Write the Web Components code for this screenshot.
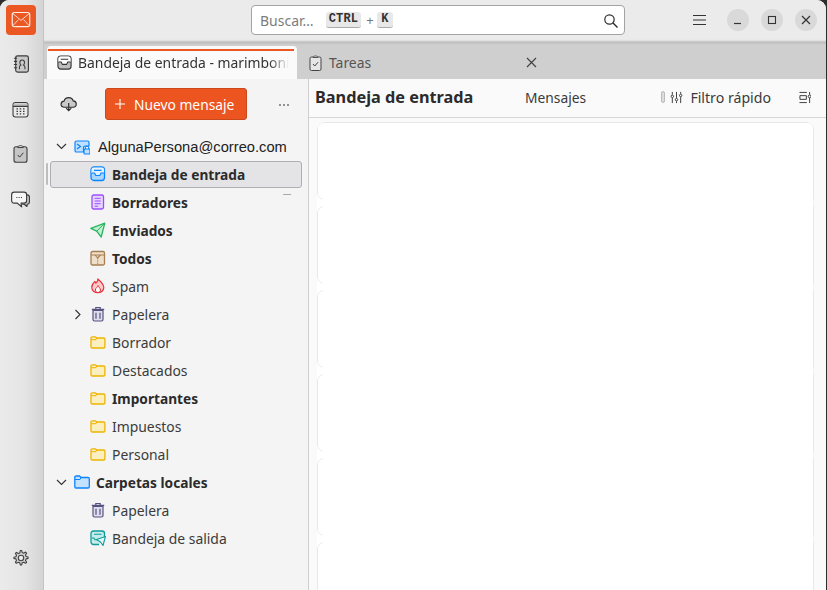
<!DOCTYPE html>
<html lang="es">
<head>
<meta charset="utf-8">
<title>Correo</title>
<style>
  html, body { margin: 0; height: 100%; background: #2d2d2d; overflow: hidden; }
  body { font-family: "Noto Sans", "Open Sans", sans-serif; font-size: 14px; color: #333; }
</style>
</head>
<body>
<tb-app>
  <tb-rail slot="rail"></tb-rail>
  <tb-topbar slot="top"></tb-topbar>
  <tb-tabs slot="tabs">
    <tb-tab active icon="inbox-gray" label="Bandeja de entrada - marimboni"></tb-tab>
    <tb-tab icon="tasks-tab" label="Tareas" closable></tb-tab>
  </tb-tabs>
  <tb-folders slot="folders">
    <tb-folder level="0" twisty="open" icon="account" account>AlgunaPersona@correo.com</tb-folder>
    <tb-folder level="1" icon="inbox" bold selected>Bandeja de entrada</tb-folder>
    <tb-folder level="1" icon="drafts" bold>Borradores</tb-folder>
    <tb-folder level="1" icon="sent" bold>Enviados</tb-folder>
    <tb-folder level="1" icon="archive" bold>Todos</tb-folder>
    <tb-folder level="1" icon="spam">Spam</tb-folder>
    <tb-folder level="1" twisty="closed" icon="trash">Papelera</tb-folder>
    <tb-folder level="1" icon="folder">Borrador</tb-folder>
    <tb-folder level="1" icon="folder">Destacados</tb-folder>
    <tb-folder level="1" icon="folder" bold>Importantes</tb-folder>
    <tb-folder level="1" icon="folder">Impuestos</tb-folder>
    <tb-folder level="1" icon="folder">Personal</tb-folder>
    <tb-folder level="0" twisty="open" icon="local" bold>Carpetas locales</tb-folder>
    <tb-folder level="1" icon="trash">Papelera</tb-folder>
    <tb-folder level="1" icon="outbox">Bandeja de salida</tb-folder>
  </tb-folders>
  <tb-messages slot="main"></tb-messages>
</tb-app>

<script>
const ICONS = {
  logo: '<rect x="1.5" y="3" width="21" height="17" rx="2.5" fill="none" stroke="#fff" stroke-width="1.4" opacity=".9"/><path d="M2.5 4.5 12 12.5l9.5-8M2.5 18.5l6.5-7M21.5 18.5l-6.5-7" fill="none" stroke="#fff" stroke-width="1.2" opacity=".75"/>',
  book: '<rect x="3.5" y=".75" width="12" height="15.5" rx="1.8" fill="#c9c9c9" stroke="#3c3c3c" stroke-width="1.1"/><path d="M1.8 3h3M1.8 6h3M1.8 9h3M1.8 12h3" stroke="#3c3c3c" stroke-width="1"/><path d="M7 13.5v-2c0-1 .7-1.6 1.4-2-.8-.6-1-1.3-1-2.3C7.4 6 8.2 4.8 9.6 4.8s2.2 1.2 2.2 2.4c0 1-.2 1.7-1 2.3.7.4 1.4 1 1.4 2v2" fill="none" stroke="#3c3c3c" stroke-width="1"/>',
  calendar: '<rect x="1" y="1.5" width="15" height="14.5" rx="2.5" fill="#e9e9e9" stroke="#3c3c3c" stroke-width="1.1"/><path d="M1.5 2.5h14v2.8h-14z" fill="#c2c2c2"/><path d="M1 5.4h15" stroke="#3c3c3c" stroke-width="1.1"/><path d="M4.5 7.8H6M7.7 7.8h1.500M11 7.800h1.500M4.500 10.300H6M7.700 10.300h1.500M11 10.300h1.500M4.500 12.800H6M7.700 12.800h1.500M11 12.800h1.500" stroke="#3c3c3c" stroke-width="1.2"/>',
  tasks: '<rect x="2" y="2" width="13" height="15.5" rx="2" fill="#c6c6c6" stroke="#3c3c3c" stroke-width="1.1"/><path d="M5.800 2.800c0-1.600 1-1.900 2.700-1.900s2.700.3 2.700 1.900z" fill="#e6e6e6" stroke="#3c3c3c"/><path d="M5.700 10.200l2 2.200 3.600-4.400" fill="none" stroke="#3c3c3c" stroke-width="1"/>',
  chat: '<path d="M14 3.500h1.200c1.500 0 2.300 1 2.300 2.300v4.200c0 1.300-.8 2.300-2.200 2.300l-.2 2.200-2.600-2.200h-2" fill="#c6c6c6" stroke="#3c3c3c" stroke-width="1.1" stroke-linejoin="round"/><path d="M3 .8h9.300c1.500 0 2.500 1 2.500 2.500v5.400c0 1.500-1 2.500-2.500 2.500H9.500l.6 3.600-4.300-3.600H3C1.500 11.200.6 10.200.6 8.700V3.300C.6 1.800 1.500.8 3 .8z" fill="#f6f6f6" stroke="#3c3c3c" stroke-width="1.1" stroke-linejoin="round"/><path d="M5 6h1M7.200 6h1M9.400 6h1" stroke="#3c3c3c" stroke-width="1"/>',
  gear: '<path d="M8.300 1h1.400l.5 2.100 1.500.6 1.900-1.100 1 1-1.100 1.900.6 1.500 2 .5v1.400l-2 .5-.6 1.500 1.100 1.900-1 1-1.900-1.100-1.500.6-.5 2.100H8.300l-.5-2.100-1.500-.6-1.900 1.100-1-1 1.100-1.900-.6-1.500-2-.5V7.800l2-.5.6-1.500-1.100-1.900 1-1 1.900 1.100 1.500-.6z" fill="#d2d2d2" stroke="#444" stroke-width="1.1" stroke-linejoin="round"/><circle cx="9" cy="8.500" r="2.700" fill="#ececec" stroke="#444" stroke-width="1.1"/>',
  search: '<circle cx="6.500" cy="6.500" r="4.700" fill="none" stroke="#2d2d2d" stroke-width="1.2"/><path d="M10 10l4.500 4.500" stroke="#2d2d2d" stroke-width="1.4"/>',
  'inbox-gray': '<rect x="1" y="1" width="14" height="14" rx="3" fill="#bdbdbd" stroke="#333" stroke-width="1.2"/><path d="M1.500 7.500h3l1.300 2.500h4.400l1.300-2.500h3V3.500q0-2-2-2h-9q-2 0-2 2z" fill="#fff"/><path d="M1.500 7.500h3l1.300 2.500h4.400l1.300-2.500h3M4 4.500h8" fill="none" stroke="#333" stroke-width="1.1"/>',
  'tasks-tab': '<rect x="2" y="2" width="11" height="13.500" rx="1.500" fill="#e6e6e6" stroke="#444" stroke-width="1"/><path d="M5.200 2.500c0-1.100.9-1.500 2.300-1.500s2.300.4 2.300 1.500z" fill="#f2f2f2" stroke="#444" stroke-width=".9"/><path d="M5 9l1.800 2 3.200-3.800" fill="none" stroke="#444" stroke-width="1"/>',
  cloud: '<path d="M4.300 11.500C2.300 11.500 1 10.300 1 8.700 1 7 2.200 5.900 3.800 5.800 4.300 3.800 6 2.500 8.200 2.500c2.100 0 3.700 1.200 4.200 3 1.600.1 2.900 1.400 2.900 3 0 1.700-1.300 3-3 3z" fill="#c9c9c9" stroke="#2d2d2d" stroke-width="1.1"/><path d="M8.200 7.500v7M5.800 12.300l2.400 2.500 2.400-2.500" fill="none" stroke="#2d2d2d" stroke-width="1.1"/>',
  sliders: '<path d="M2.500 1v3M2.500 7.500V13M7 1v6.500M7 11v2M11.500 1v2M11.500 6.500V13" stroke="#333" stroke-width="1"/><circle cx="2.500" cy="5.800" r="1.300" fill="none" stroke="#333"/><circle cx="7" cy="9.300" r="1.300" fill="none" stroke="#333"/><circle cx="11.500" cy="4.800" r="1.300" fill="none" stroke="#333"/>',
  layout: '<path d="M.5 1.500h8M.5 12.500h8M1 5h7v4H1zM11.500 1v3M11.500 7.500V13" fill="none" stroke="#333" stroke-width="1"/><circle cx="11.500" cy="5.800" r="1.500" fill="none" stroke="#333"/>',
  account: '<path d="M2.500 2h11c.9 0 1.500.6 1.500 1.500V7H11c-1 0-1.500.7-1.500 1.500V13h-7C1.600 13 1 12.400 1 11.500v-8C1 2.600 1.600 2 2.500 2z" fill="#bfe0ff" stroke="#0a84ff" stroke-width="1.2"/><path d="M3 5l3.500 2.500L3 10" fill="none" stroke="#0a84ff" stroke-width="1.2"/><rect x="10" y="10" width="6" height="5" rx="1" fill="#bfe0ff" stroke="#0a84ff" stroke-width="1.2"/><path d="M11.300 10V8.800c0-1 .7-1.600 1.700-1.600s1.700.6 1.700 1.600V10" fill="none" stroke="#0a84ff" stroke-width="1.1"/>',
  inbox: '<rect x="1" y="1" width="13.500" height="13.500" rx="3" fill="#a9d6ff" stroke="#0a84ff" stroke-width="1.3"/><path d="M1.500 7h3l1.300 2.500h4l1.300-2.500h3V3.500q0-2-2-2h-8.600q-2 0-2 2z" fill="#e4f2ff"/><path d="M1.500 7h3l1.300 2.500h4l1.300-2.500h3M4 4.300h7.500" fill="none" stroke="#0a84ff" stroke-width="1.2"/>',
  drafts: '<rect x="2" y="1" width="11.500" height="14" rx="1.800" fill="#e8d5ff" stroke="#9a4dff" stroke-width="1.3"/><path d="M4.700 4.300h6M4.700 7h6M4.700 9.700h6M4.700 12.200h3.500" stroke="#9a4dff" stroke-width="1"/>',
  sent: '<path d="M.8 6.300 14.800 1.200 11.200 15 6.700 9.200z" fill="#bfeed2" stroke="#2bb560" stroke-width="1.3" stroke-linejoin="round"/><path d="M6.700 9.200 14.800 1.200" stroke="#2bb560" stroke-width="1"/>',
  archive: '<rect x="1" y="1.500" width="13.500" height="13.500" rx="1.500" fill="#f0dfc8" stroke="#a57e52" stroke-width="1.3"/><path d="M1 5h13.500M5 5l2.700 3L10.500 5" fill="none" stroke="#a57e52" stroke-width="1.1"/><path d="M7.700 8v7" stroke="#a57e52" stroke-width="1" stroke-dasharray="1.300 1"/>',
  spam: '<path d="M7.800 1C8.300 3.300 6.800 4.200 5.800 5.200 5.400 4.500 5.200 4 5 3.400 3 5 1.800 6.900 1.800 9.300c0 3.200 2.500 5.400 6 5.400s6-2.200 6-5.300c0-3.200-2.700-5.600-6-8.400z" fill="#ffc9c9" stroke="#e8303a" stroke-width="1.2" stroke-linejoin="round"/><path d="M8 7.500c-.2 1.400-2.600 2.400-2.600 4.500 0 1.500 1.100 2.500 2.500 2.500s2.600-1 2.600-2.500c0-1.800-2-2.800-2.500-4.500z" fill="#fff" stroke="#e8303a" stroke-width="1"/>',
  trash: '<path d="M3 4.500h10V13.500c0 1-.6 1.500-1.500 1.500h-7C3.600 15 3 14.500 3 13.500z" fill="#dfdcee" stroke="#56527f" stroke-width="1.2"/><path d="M1.800 3.300h12.400M5.800 3V1.500h4.400V3M6 6.700V12.700M10 6.700V12.700" fill="none" stroke="#56527f" stroke-width="1.2"/>',
  folder: '<path d="M1 4C1 3.300 1.500 2.800 2.300 2.800h3.200l1.200 1.200h6.900c.8 0 1.300.5 1.300 1.300v7.500c0 .8-.5 1.200-1.300 1.200H2.300C1.500 14 1 13.600 1 12.800z" fill="#fbeebf" stroke="#f0b400" stroke-width="1.3"/><path d="M1 5.700h5l.8-1.700" fill="none" stroke="#f0b400" stroke-width="1"/>',
  local: '<path d="M.8 3.300C.8 2.500 1.300 2 2.100 2h3.400l1.500 1.500h7c.8 0 1.300.5 1.300 1.300v8c0 .8-.5 1.200-1.300 1.200h-12C1.300 14 .8 13.600.8 12.800z" fill="#c4e2ff" stroke="#0a84ff" stroke-width="1.3"/><path d="M.8 5.500h5.200l1-2" fill="none" stroke="#0a84ff" stroke-width="1"/>',
  outbox: '<path d="M9 14.500H3.500C2 14.500 1 13.500 1 12V3.500C1 2 2 1 3.500 1h8.500c1.500 0 2.500 1 2.500 2.500V7" fill="#c6ecea" stroke="#0f9c9c" stroke-width="1.3"/><path d="M1.500 8h2.500l1 1.800h2.500M4 4.300h7.500" fill="none" stroke="#0f9c9c" stroke-width="1.1"/><path d="M6.500 9.500 15.500 6.500 13 15.500l-2.500-3.500z" fill="#e4f7f6" stroke="#0f9c9c" stroke-width="1.1" stroke-linejoin="round"/>',
};

function icon(name, w, h, vb) {
  return `<svg width="${w}" height="${h}" viewBox="${vb}" aria-hidden="true">${ICONS[name]}</svg>`;
}

class TbApp extends HTMLElement {
  constructor() {
    super();
    this.attachShadow({ mode: 'open' });
    this.shadowRoot.innerHTML = `
      <style>
        :host {
          display: grid;
          grid-template-columns: 44px 1fr;
          grid-template-rows: 42px 37px 1fr;
          width: 826px;
          height: 590px;
          overflow: hidden;
          background: #ebebeb;
          border-radius: 9px 9px 0 0;
        }
        .rail { grid-row: 1 / 4; display: flex; min-height: 0; }
        .main { display: grid; grid-template-columns: 265px 1fr; min-height: 0; }
      </style>
      <div class="rail"><slot name="rail"></slot></div>
      <slot name="top"></slot>
      <slot name="tabs"></slot>
      <div class="main">
        <slot name="folders"></slot>
        <slot name="main"></slot>
      </div>
    `;
  }
}

class TbRail extends HTMLElement {
  constructor() {
    super();
    this.attachShadow({ mode: 'open' });
    this.shadowRoot.innerHTML = `
      <style>
        :host {
          display: flex;
          flex-direction: column;
          align-items: center;
          width: 44px;
          box-sizing: border-box;
          padding: 5px 2px 0 0;
          background: linear-gradient(to right, #ebebeb, #e4e4e4 60%, #d4d4d4);
          border-right: 1px solid #c4c4c4;
        }
        .logo {
          width: 30px; height: 30px;
          border-radius: 4px;
          background: #ec5823;
          display: flex; align-items: center; justify-content: center;
          margin-bottom: 19px;
        }
        .btn { height: 20px; display: flex; align-items: center; justify-content: center; margin-bottom: 25px; }
        .chat { margin-top: 2px; }
        .gear { margin-top: auto; margin-bottom: 23px; height: 18px; display: flex; }
      </style>
      <div class="logo">${icon('logo', 20, 20, '0 0 24 24')}</div>
      <div class="btn">${icon('book', 18, 20, '0 0 17 17')}</div>
      <div class="btn">${icon('calendar', 17, 17, '0 0 17 17')}</div>
      <div class="btn">${icon('tasks', 17, 20, '0 0 17 18.5')}</div>
      <div class="btn chat">${icon('chat', 19, 20, '0 0 18 18.5')}</div>
      <div class="gear">${icon('gear', 18, 18, '0 0 18 17')}</div>
    `;
  }
}

class TbTopbar extends HTMLElement {
  constructor() {
    super();
    this.attachShadow({ mode: 'open' });
    this.shadowRoot.innerHTML = `
      <style>
        :host {
          display: flex;
          align-items: flex-start;
          box-sizing: border-box;
          padding: 5px 9px 0 207px;
          background: #ebebeb;
          box-shadow: inset 0 -2px 2px -1px #c0c0c0;
        }
        .search {
          width: 374px; height: 30px;
          box-sizing: border-box;
          display: flex; align-items: center;
          padding: 0 6px 0 8px;
          background: #fff;
          border: 1px solid #a3a3a3;
          border-radius: 4px;
          color: #7d7d7d;
        }
        kbd {
          font: 700 12px "Liberation Mono", "DejaVu Sans Mono", monospace;
          letter-spacing: .2px;
          color: #333;
          background: #e8e8e8;
          border-bottom: 1px solid #aaa;
          border-radius: 3px;
          padding: 1px 3px;
          line-height: 13px;
        }
        kbd + span { width: 6px; text-align: center; }
        .hint { margin-left: 12px; display: flex; align-items: center; gap: 5px; color: #777; font-size: 13px; }
        .k { padding: 1px 4px; }
        .mag { margin-left: auto; display: flex; }
        .menu { margin: 9px 0 0 68px; display: flex; }
        .win {
          width: 22px; height: 22px;
          border-radius: 50%;
          background: #d9d9d9;
          margin: 4px 0 0 12px;
          display: flex; align-items: center; justify-content: center;
        }
        .menu + .win { margin-left: 21px; }
      </style>
      <div class="search">
        <span>Buscar…</span>
        <span class="hint"><kbd>CTRL</kbd><span>+</span><kbd class="k">K</kbd></span>
        <span class="mag"><svg width="15" height="15" viewBox="0 0 15 15">${ICONS.search}</svg></span>
      </div>
      <div class="menu"><svg width="13" height="12" viewBox="0 0 13 12"><path d="M0 1.500h13M0 6h13M0 10.500h13" stroke="#333" stroke-width="1"/></svg></div>
      <div class="win"><svg width="10" height="10" viewBox="0 0 10 10"><path d="M1 8.500h7" stroke="#333" stroke-width="1.2"/></svg></div>
      <div class="win"><svg width="10" height="10" viewBox="0 0 10 10"><rect x="1.500" y="1.500" width="7" height="7" fill="none" stroke="#333" stroke-width="1.1"/></svg></div>
      <div class="win"><svg width="10" height="10" viewBox="0 0 10 10"><path d="M1 1l8 8M9 1l-8 8" stroke="#333" stroke-width="1.2"/></svg></div>
    `;
  }
}

class TbTabs extends HTMLElement {
  constructor() {
    super();
    this.attachShadow({ mode: 'open' });
    this.shadowRoot.innerHTML = `
      <style>
        :host {
          display: flex;
          align-items: flex-end;
          box-sizing: border-box;
          padding-left: 3px;
          background: linear-gradient(#bdbdbd, #cfcfcf 3px);
        }
      </style>
      <slot></slot>
    `;
  }
}

class TbTab extends HTMLElement {
  connectedCallback() {
    if (this.shadowRoot) return;
    this.attachShadow({ mode: 'open' });
    const active = this.hasAttribute('active');
    const name = this.getAttribute('icon');
    this.shadowRoot.innerHTML = `
      <style>
        :host {
          display: flex;
          align-items: center;
          position: relative;
          box-sizing: border-box;
          width: 250px;
          height: 33px;
          padding: ${active ? '0 0 0 10px' : '0 0 0 11px'};
          gap: ${active ? 6 : 5}px;
          background: ${active ? '#fafafa' : 'transparent'};
          border-radius: 4px 4px 0 0;
          color: ${active ? '#333' : '#555'};
          font-size: 13.9px;
          white-space: nowrap;
        }
        .bar {
          position: absolute; left: 1px; right: 3px; top: 3px;
          height: 2px; background: #ec5823;
        }
        .label {
          flex: 1; min-width: 0;
          ${active ? '-webkit-mask-image: linear-gradient(to left, transparent 8px, #000 28px);' : ''}
        }
        svg { flex: none; }
        .close { flex: none; display: flex; margin-right: 10px; }
      </style>
      ${active ? '<span class="bar"></span>' : ''}
      ${icon(name, active ? 15 : 16, active ? 15 : 16, '0 0 16 16')}
      <span class="label">${this.getAttribute('label')}</span>
      ${this.hasAttribute('closable') ? '<span class="close"><svg width="11" height="11" viewBox="0 0 11 11"><path d="M1 1l9 9M10 1l-9 9" stroke="#444" stroke-width="1.2"/></svg></span>' : ''}
    `;
  }
}

class TbFolders extends HTMLElement {
  constructor() {
    super();
    this.attachShadow({ mode: 'open' });
    this.shadowRoot.innerHTML = `
      <style>
        :host {
          display: block;
          position: relative;
          box-sizing: border-box;
          background: #f4f4f4;
          border-right: 1px solid #cfcfcf;
        }
        header { display: flex; align-items: center; height: 53px; padding: 0 0 4px 16px; box-sizing: border-box; }
        .new {
          margin-left: 28px;
          width: 142px; height: 32px;
          box-sizing: border-box;
          display: flex; align-items: center;
          padding-left: 9px;
          gap: 9px;
          background: #ec5520;
          border: 1px solid #c9491c;
          border-radius: 3px;
          color: #fff;
          font-size: 13.8px;
          margin-top: 1px;
        }
        .more { margin-left: 31px; display: flex; margin-top: 2px; }
        .cloud { display: flex; margin-top: -1px; }
        .grip { position: absolute; left: 2px; top: 84px; width: 2px; height: 22px; background: #bdbdbd; border-radius: 1px; }
        .tick { position: absolute; left: 239px; top: 115px; width: 8px; height: 1px; background: #a8a8a8; }
      </style>
      <header>
        <span class="cloud">${icon('cloud', 17, 17, '0 0 16 16')}</span>
        <span class="new">
          <svg width="10" height="10" viewBox="0 0 10 10"><path d="M5 0v10M0 5h10" stroke="#fff" stroke-width="1.1"/></svg>
          Nuevo mensaje
        </span>
        <span class="more"><svg width="12" height="4" viewBox="0 0 12 4"><path d="M1.500 2h1M5.500 2h1M9.500 2h1" stroke="#333" stroke-width="2"/></svg></span>
      </header>
      <span class="grip"></span>
      <span class="tick"></span>
      <slot></slot>
    `;
  }
}

class TbFolder extends HTMLElement {
  connectedCallback() {
    if (this.shadowRoot) return;
    this.attachShadow({ mode: 'open' });
    const level = +this.getAttribute('level');
    const twisty = this.getAttribute('twisty');
    const name = this.getAttribute('icon');
    const selected = this.hasAttribute('selected');
    const account = this.hasAttribute('account');
    const chevron = twisty === 'open'
      ? '<path d="M1 3l4.500 4.500L10 3" fill="none" stroke="#333" stroke-width="1.1"/>'
      : '<path d="M3.500 1l4.500 4.500-4.500 4.500" fill="none" stroke="#333" stroke-width="1.1"/>';
    this.shadowRoot.innerHTML = `
      <style>
        :host {
          display: block;
          height: 28px;
          font-size: 13.9px;
          color: #3b3b3b;
          ${this.hasAttribute('bold') ? 'font-weight: 700; font-size: 13.7px; color: #2b2b2b;' : ''}
          ${account ? 'font-family: "Liberation Sans", Arimo, sans-serif; font-size: 14.7px; color: #222;' : ''}
        }
        .row {
          display: flex; align-items: center;
          position: relative;
          height: 28px;
          box-sizing: border-box;
          padding-left: ${level ? 46 : 30}px;
          ${account ? 'padding-top: 1px;' : ''}
          gap: ${level ? 6 : (account ? 8 : 6)}px;
        }
        .sel {
          position: absolute; left: 6px; width: 252px; top: 1px; bottom: 0;
          box-sizing: border-box;
          background: #e4e4e6;
          border: 1px solid #aeaeb4;
          border-radius: 3px;
        }
        .twisty { position: absolute; left: ${level ? 28 : 12}px; top: 9px; display: flex; }
        svg, span { position: relative; }
        .ic { display: flex; flex: none; }
      </style>
      <div class="row">
        ${selected ? '<div class="sel"></div>' : ''}
        ${twisty ? `<span class="twisty"><svg width="11" height="11" viewBox="0 0 11 11">${chevron}</svg></span>` : ''}
        <span class="ic">${icon(name, 16, 16, '0 0 16 16')}</span>
        <span><slot></slot></span>
      </div>
    `;
  }
}

class TbMessages extends HTMLElement {
  constructor() {
    super();
    this.attachShadow({ mode: 'open' });
    this.shadowRoot.innerHTML = `
      <style>
        :host { display: flex; flex-direction: column; min-height: 0; overflow: hidden; background: #fafafa; }
        header {
          flex: none;
          height: 39px;
          box-sizing: border-box;
          display: flex; align-items: center;
          padding: 0 15px 2px 6px;
          border-bottom: 1px solid #d6d6d6;
          color: #3b3b3b;
        }
        h1 { margin: 0; font-size: 16.3px; font-weight: 700; color: #2b2b2b; width: 210px; white-space: nowrap; }
        .count { font-size: 13.8px; }
        .grip { margin-left: auto; width: 4px; height: 12px; box-sizing: border-box; background: #ddd; border: 1px solid #bbb; border-radius: 2px; }
        .filter { margin-left: 5px; display: flex; align-items: center; gap: 7px; font-size: 14.15px; }
        .opts { margin-left: 28px; display: flex; }
        .list {
          flex: 1;
          margin: 4px 12px 0 8px;
          background: linear-gradient(#f3f3f3, #f3f3f3) right / 1px 100% no-repeat, #fff;
          border-radius: 8px 8px 0 0;
          overflow: hidden;
        }
      </style>
      <header>
        <h1>Bandeja de entrada</h1>
        <span class="count">Mensajes</span>
        <span class="grip"></span>
        <span class="filter">${icon('sliders', 13, 13, '0 0 14 14')}<span>Filtro rápido</span></span>
        <span class="opts">${icon('layout', 12, 13, '0 0 13 14')}</span>
      </header>
      <div class="list">
        <tb-card></tb-card><tb-card></tb-card><tb-card></tb-card><tb-card></tb-card><tb-card></tb-card><tb-card></tb-card>
      </div>
    `;
  }
}

class TbCard extends HTMLElement {
  constructor() {
    super();
    this.attachShadow({ mode: 'open' });
    this.shadowRoot.innerHTML = `
      <style>
        :host {
          display: block;
          height: 78px;
          margin-bottom: 6px;
          box-sizing: border-box;
          border: 1px solid #e8e8e8;
          border-radius: 7px 0 0 7px;
          -webkit-mask:
            linear-gradient(#000, #000) left / 6px 100% no-repeat,
            linear-gradient(#000, #000) right / 1px 100% no-repeat;
        }
        :host(:first-child) {
          border-radius: 7px 7px 0 7px;
          -webkit-mask:
            linear-gradient(#000, #000) left / 6px 100% no-repeat,
            linear-gradient(#000, #000) right / 1px 100% no-repeat,
            linear-gradient(#000, #000) top / 100% 8px no-repeat;
        }
      </style>
    `;
  }
}

customElements.define('tb-app', TbApp);
customElements.define('tb-rail', TbRail);
customElements.define('tb-topbar', TbTopbar);
customElements.define('tb-tabs', TbTabs);
customElements.define('tb-tab', TbTab);
customElements.define('tb-folders', TbFolders);
customElements.define('tb-folder', TbFolder);
customElements.define('tb-messages', TbMessages);
customElements.define('tb-card', TbCard);
</script>
</body>
</html>
